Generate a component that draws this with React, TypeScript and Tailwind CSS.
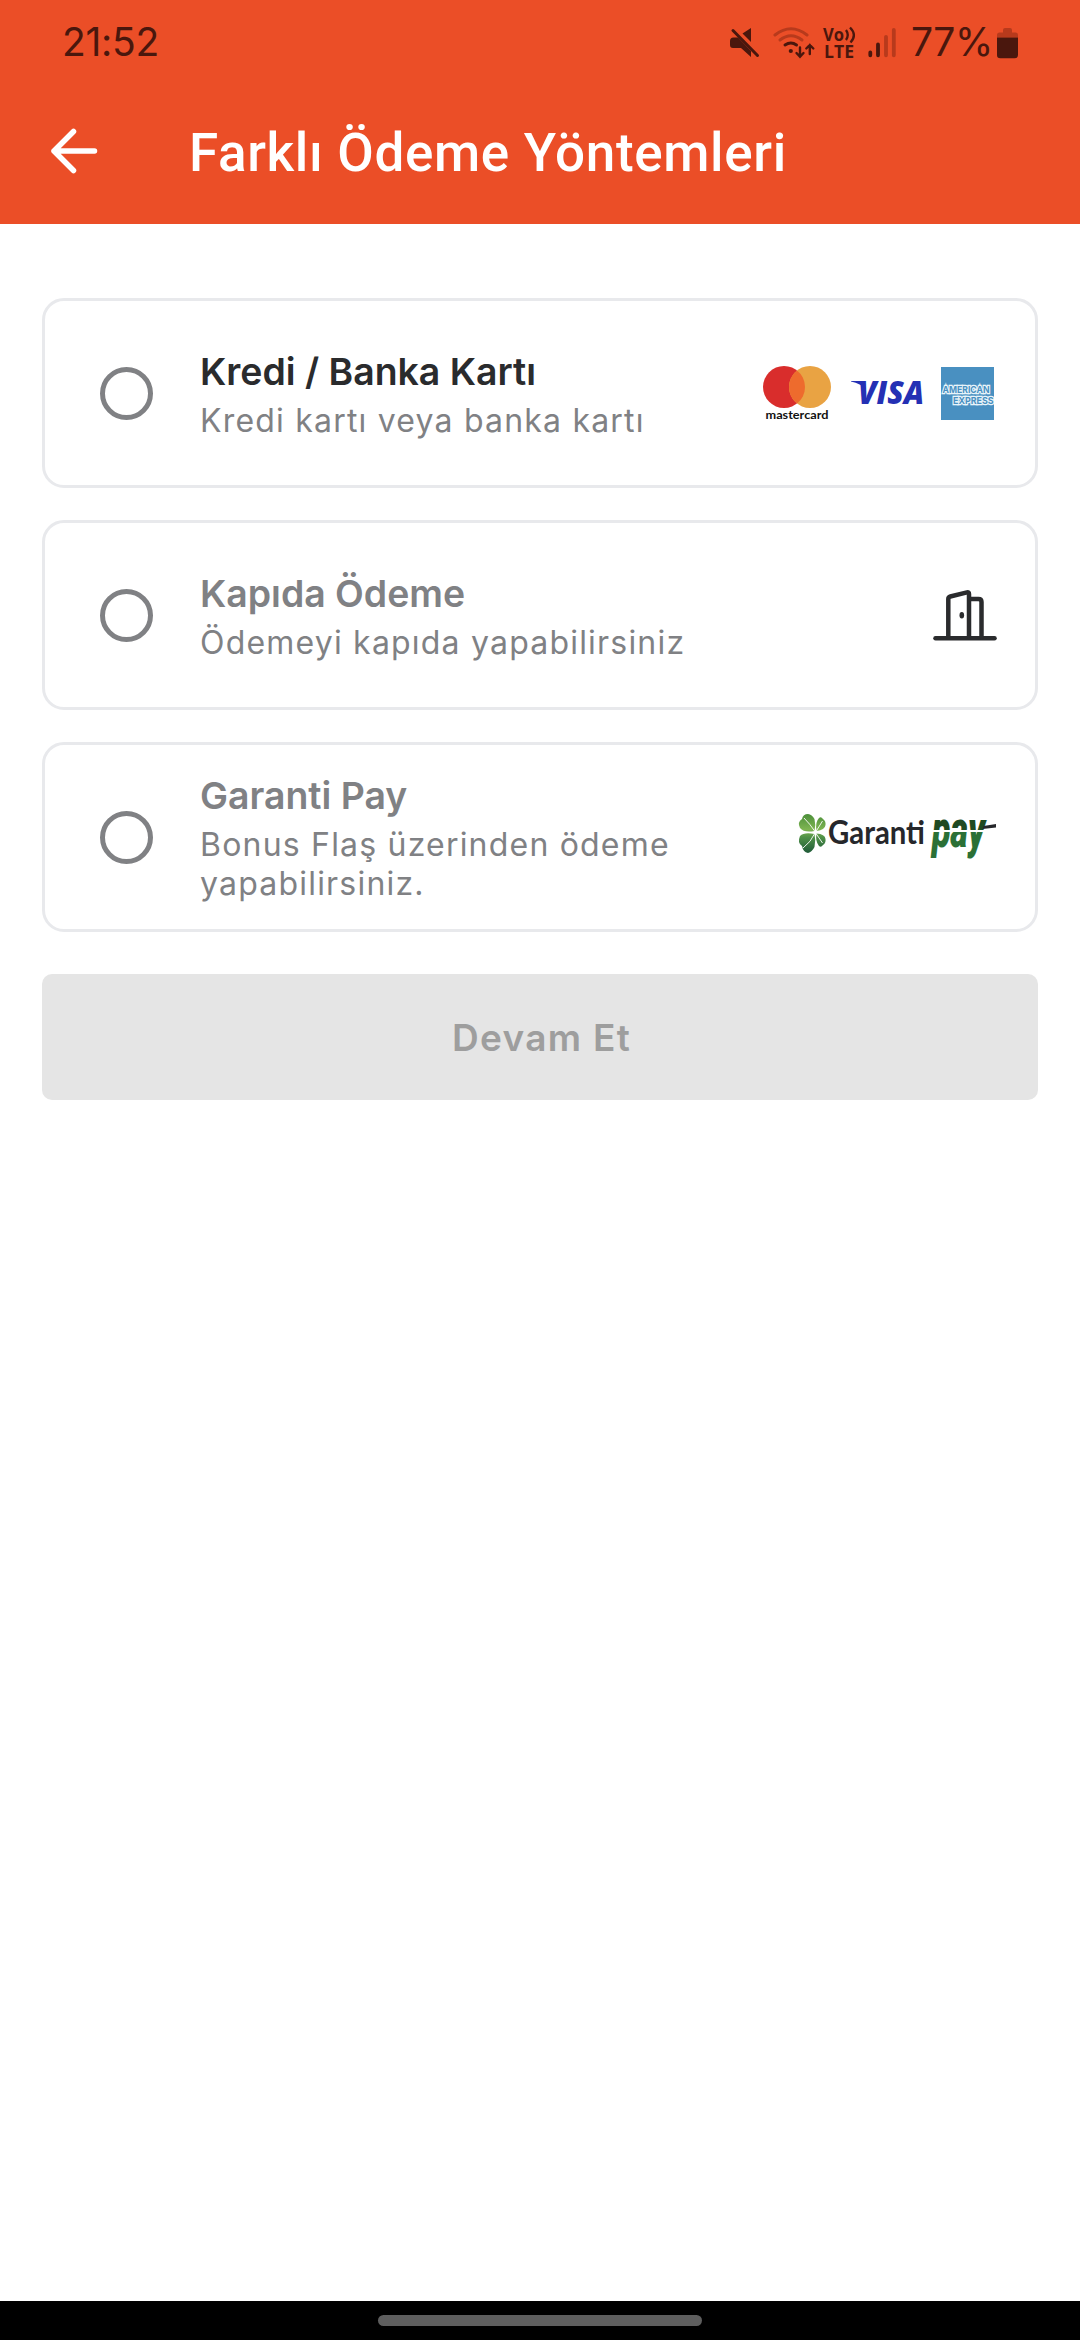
import { useState, type ReactNode } from "react";

type PaymentMethod = {
   id: string;
   title: string;
   description: string;
   active: boolean;
   logo: ReactNode;
};

// ── Status bar icons ──────────────────────────────────────────────────────
function MuteIcon() {
   return (
      <svg width="30" height="32" viewBox="730 27 30 32" fill="#4a170d">
         <path d="M733.5 37.5 L738 37.5 L751 51 L751 57 L741 48 L733 48 Q730 48 730 45 L730 41 Q730 37.5 733.5 37.5Z" />
         <path d="M751 28 L751 42 L742.5 33.5 Z" />
         <path d="M733 30.5 L757.5 55.5" stroke="#4a170d" strokeWidth="3" strokeLinecap="round" />
      </svg>
   );
}

function WifiIcon() {
   return (
      <svg width="43" height="32" viewBox="773 27 43 32" fill="none" strokeWidth="3" strokeLinecap="round">
         <path d="M775 35 Q791 22.5 807 35" stroke="#b83a1c" />
         <path d="M780 40 Q791 31.5 802 40" stroke="#b83a1c" />
         <path d="M785 45 Q791 41 796.5 45" stroke="#4a170d" />
         <circle cx="790.8" cy="51" r="2.1" fill="#4a170d" />
         <path d="M800 47.5 V56.5 M796.5 53 L800 56.7 L803.5 53" stroke="#4a170d" strokeWidth="2.4" />
         <path d="M809.8 54 V45 M806.3 48.5 L809.8 45 L813.3 48.5" stroke="#4a170d" strokeWidth="2.4" />
      </svg>
   );
}

function VolteIcon() {
   return (
      <svg
         width="34"
         height="34"
         viewBox="822 26 34 34"
         className="overflow-visible"
         fill="#4a170d"
         fontFamily="'Open Sans', sans-serif"
         fontWeight="700"
      >
         <text x="823" y="40.5" fontSize="17" textLength="21" lengthAdjust="spacingAndGlyphs">Vo</text>
         <text x="824" y="58" fontSize="18" textLength="30" lengthAdjust="spacingAndGlyphs">LTE</text>
         <g fill="none" stroke="#4a170d" strokeWidth="2.3">
            <path d="M846 30 Q849.5 35 846 40" />
            <path d="M850 27.5 Q857.5 35 850.5 42.5" />
         </g>
      </svg>
   );
}

function SignalIcon() {
   return (
      <svg width="29" height="32" viewBox="868 27 29 32" strokeWidth="3.8" strokeLinecap="round">
         <path d="M870.3 52.5 V55.3 M878 44.5 V55.3" stroke="#4a170d" />
         <path d="M886 36.8 V55.3 M893.8 30 V55.3" stroke="#b83a1c" />
      </svg>
   );
}

function BatteryIcon() {
   return (
      <svg width="21" height="32" viewBox="997 26.5 21 32">
         <path d="M997 37 V34.5 Q997 32 999.5 32 H1003 V29.5 Q1003 27.5 1005 27.5 H1010 Q1012 27.5 1012 29.5 V32 H1015.5 Q1018 32 1018 34.5 V37Z" fill="#b83a1c" />
         <path d="M997 37 H1018 V54.5 Q1018 57.8 1014.7 57.8 H1000.3 Q997 57.8 997 54.5Z" fill="#4a170d" />
      </svg>
   );
}

// ── Payment logos ─────────────────────────────────────────────────────────
function CardLogos() {
   return (
      <div className="mr-[3px] flex items-center">
         <svg width="70" height="56" viewBox="762 365 70 56" className="overflow-visible">
            <circle cx="784" cy="387" r="21" fill="#d92d2c" />
            <circle cx="810" cy="387" r="21" fill="#e9a343" />
            <path d="M797 370.5 A21 21 0 0 1 797 403.5 A21 21 0 0 1 797 370.5Z" fill="#ee6b2d" />
            <text
               x="765.5"
               y="418.5"
               fontSize="11"
               fontWeight="700"
               fontFamily="Lato, sans-serif"
               fill="#111111"
               textLength="63"
               lengthAdjust="spacingAndGlyphs"
            >
               mastercard
            </text>
         </svg>
         <svg width="74" height="26" viewBox="850 380 74 26" className="ml-[18px] overflow-visible">
            <path d="M851 381 H861 Q864 381 864.5 384 L865.5 389 Q861 383.5 851 381.5Z" fill="#2430b4" />
            <text
               x="858"
               y="404"
               fontSize="32"
               fontWeight="800"
               fontStyle="italic"
               fontFamily="'Open Sans', sans-serif"
               fill="#2430b4"
               textLength="66"
               lengthAdjust="spacingAndGlyphs"
            >
               VISA
            </text>
         </svg>
         <svg
            width="53"
            height="53"
            viewBox="0 0 53 53"
            className="ml-[17px] bg-[#4990c1]"
            fill="#4990c1"
            stroke="#e8f4fa"
            strokeWidth="2.4"
            paintOrder="stroke"
            fontFamily="Inter, sans-serif"
            fontWeight="700"
            fontSize="9.5"
         >
            <text x="1.5" y="25.8" textLength="47" lengthAdjust="spacingAndGlyphs">AMERICAN</text>
            <text x="12" y="36.5" textLength="40.5" lengthAdjust="spacingAndGlyphs">EXPRESS</text>
         </svg>
      </div>
   );
}

function DoorLogo() {
   return (
      <svg
         width="64"
         height="54"
         viewBox="932.5 588 64 54"
         fill="none"
         stroke="#2a2b2d"
         strokeWidth="4.5"
         strokeLinecap="round"
         strokeLinejoin="round"
      >
         <path d="M935 638.3 H994" />
         <path d="M947.8 637 V599 Q947.8 597 949.8 596.5 L966.5 592.4 Q968.5 592 968.5 594 V637" />
         <path d="M970 599 H978 Q981 599 981 602 V637" />
         <ellipse cx="961.3" cy="615.3" rx="2.3" ry="3.2" fill="#2a2b2d" stroke="none" />
      </svg>
   );
}

function GarantiLogo() {
   return (
      <svg width="200" height="50" viewBox="797 812 200 50" className="overflow-visible">
         <defs>
            <linearGradient id="leaf" x1="0" y1="814" x2="0" y2="853" gradientUnits="userSpaceOnUse">
               <stop offset="0" stopColor="#4c8f3a" />
               <stop offset="0.4" stopColor="#7fb552" />
               <stop offset="0.6" stopColor="#4f9048" />
               <stop offset="1" stopColor="#1f5a38" />
            </linearGradient>
            <linearGradient id="pay" x1="0" y1="812" x2="0" y2="862" gradientUnits="userSpaceOnUse">
               <stop offset="0.36" stopColor="#1f4a22" />
               <stop offset="0.36" stopColor="#ffffff" />
               <stop offset="0.39" stopColor="#ffffff" />
               <stop offset="0.39" stopColor="#2b7036" />
            </linearGradient>
         </defs>
         <g fill="url(#leaf)">
            <path d="M814.5 831 Q804 833 800 828 Q797 822 802 819 Q803 814 808 814 Q812 814.5 814.5 819 Q816 825 814.5 831Z" />
            <path d="M814.5 834 Q804 832 800 836 Q797 843 802 846 Q803 852 808 853 Q812 852 814.5 847 Q816 840 814.5 834Z" />
            <path d="M816.5 831 Q815 822 819 818 Q821 816 823 819 Q826 821 825.5 825 Q825 830 816.5 831Z" />
            <path d="M816.5 833.5 Q815 841 819 846 Q821 848 823 845 Q826 843 825.5 839 Q825 834 816.5 833.5Z" />
         </g>
         <g stroke="#ffffff" strokeWidth="0.9" fill="none">
            <path d="M815 831.5 Q810 824 804 818" />
            <path d="M815 833 Q811 842 803 848" />
            <path d="M816 831.5 L822.5 821" />
            <path d="M816 833.5 L822.5 843" />
         </g>
         <text
            x="828"
            y="844.3"
            fontSize="32.5"
            fontWeight="700"
            fontFamily="Lato, sans-serif"
            fill="#26272b"
            textLength="97"
            lengthAdjust="spacingAndGlyphs"
         >
            Garanti
         </text>
         <text
            x="932"
            y="846.5"
            fontSize="52"
            fontWeight="900"
            fontStyle="italic"
            fontFamily="Roboto, sans-serif"
            fill="url(#pay)"
            textLength="53"
            lengthAdjust="spacingAndGlyphs"
         >
            pay
         </text>
         <path d="M983.5 826 L996 824 V827.5 L982.5 829Z" fill="#26272b" />
      </svg>
   );
}

const METHODS: PaymentMethod[] = [
   {
      id: "card",
      title: "Kredi / Banka Kartı",
      description: "Kredi kartı veya banka kartı",
      active: true,
      logo: <CardLogos />,
   },
   {
      id: "door",
      title: "Kapıda Ödeme",
      description: "Ödemeyi kapıda yapabilirsiniz",
      active: false,
      logo: <DoorLogo />,
   },
   {
      id: "garanti",
      title: "Garanti Pay",
      description: "Bonus Flaş üzerinden ödeme yapabilirsiniz.",
      active: false,
      logo: <GarantiLogo />,
   },
];

function MethodCard({ method, selected, onSelect }: { method: PaymentMethod; selected: boolean; onSelect: () => void }) {
   return (
      <button
         type="button"
         onClick={onSelect}
         className="flex h-[190px] w-full items-center rounded-[22px] border-3 border-[#e8e9ec] pr-[38px] pl-[55px] text-left"
      >
         <span className="flex size-[53px] shrink-0 items-center justify-center rounded-full border-[5.5px] border-[#808184]">
            {selected && <span className="size-6 rounded-full bg-[#eb4e27]" />}
         </span>
         <span className="ml-[47px] flex w-[520px] flex-col pt-0.5">
            <span
               className={
                  method.active
                     ? "text-[37.4px] leading-[46px] font-semibold text-[#2a2b2d]"
                     : "text-[37.4px] leading-[46px] font-semibold text-[#808184]"
               }
            >
               {method.title}
            </span>
            <span className="mt-1.5 text-[32px] leading-[39px] tracking-[1.2px] text-[#808184]">
               {method.description}
            </span>
         </span>
         <span className="ml-auto shrink-0">{method.logo}</span>
      </button>
   );
}

export default function App() {
   const [selected, setSelected] = useState<string | null>(null);

   return (
      <div className="flex h-[2340px] w-[1080px] flex-col bg-white font-['Inter',sans-serif]">
         {/* Header */}
         <header className="flex h-56 flex-col bg-[#eb4e27]">
            <div className="flex h-[85px] items-center px-[62px] text-[#4a170d]">
               <span className="text-[39px] tracking-[-0.3px]">21:52</span>
               <div className="ml-auto flex items-center">
                  <MuteIcon />
                  <div className="ml-[13px] flex"><WifiIcon /></div>
                  <div className="ml-1.5 flex"><VolteIcon /></div>
                  <div className="ml-3 flex"><SignalIcon /></div>
                  <span className="ml-3.5 w-[82px] text-[39px] tracking-[-0.5px]">77%</span>
                  <div className="ml-1 flex"><BatteryIcon /></div>
               </div>
            </div>
            <div className="flex h-[131px] items-center pl-[50px]">
               <svg
                  width="48"
                  height="46"
                  viewBox="50 127.5 48 46"
                  fill="none"
                  stroke="#ffffff"
                  strokeWidth="5.5"
                  strokeLinecap="round"
                  strokeLinejoin="round"
               >
                  <path d="M94.5 150.5 H54 M73.5 131 L54 150.5 L73.5 170" />
               </svg>
               <h1 className="mt-1.5 ml-[91px] font-['Roboto',sans-serif] text-[53px] font-medium tracking-[0.65px] text-white">
                  Farklı Ödeme Yöntemleri
               </h1>
            </div>
         </header>

         {/* Payment methods */}
         <main className="flex flex-1 flex-col px-[42px] pt-[74px]">
            <div className="flex flex-col gap-8">
               {METHODS.map((m) => (
                  <MethodCard key={m.id} method={m} selected={selected === m.id} onSelect={() => setSelected(m.id)} />
               ))}
            </div>
            <button
               type="button"
               disabled={!selected}
               className="mt-[42px] h-[126px] rounded-[10px] bg-[#e5e5e5] pt-0.5 pl-[3px] text-[37px] font-semibold tracking-[1.3px] text-[#9e9e9e]"
            >
               Devam Et
            </button>
         </main>

         {/* Gesture bar */}
         <footer className="flex h-[39px] justify-center bg-black pt-3.5">
            <div className="h-[11px] w-[324px] rounded-full bg-[#5e5e5e]" />
         </footer>
      </div>
   );
}
